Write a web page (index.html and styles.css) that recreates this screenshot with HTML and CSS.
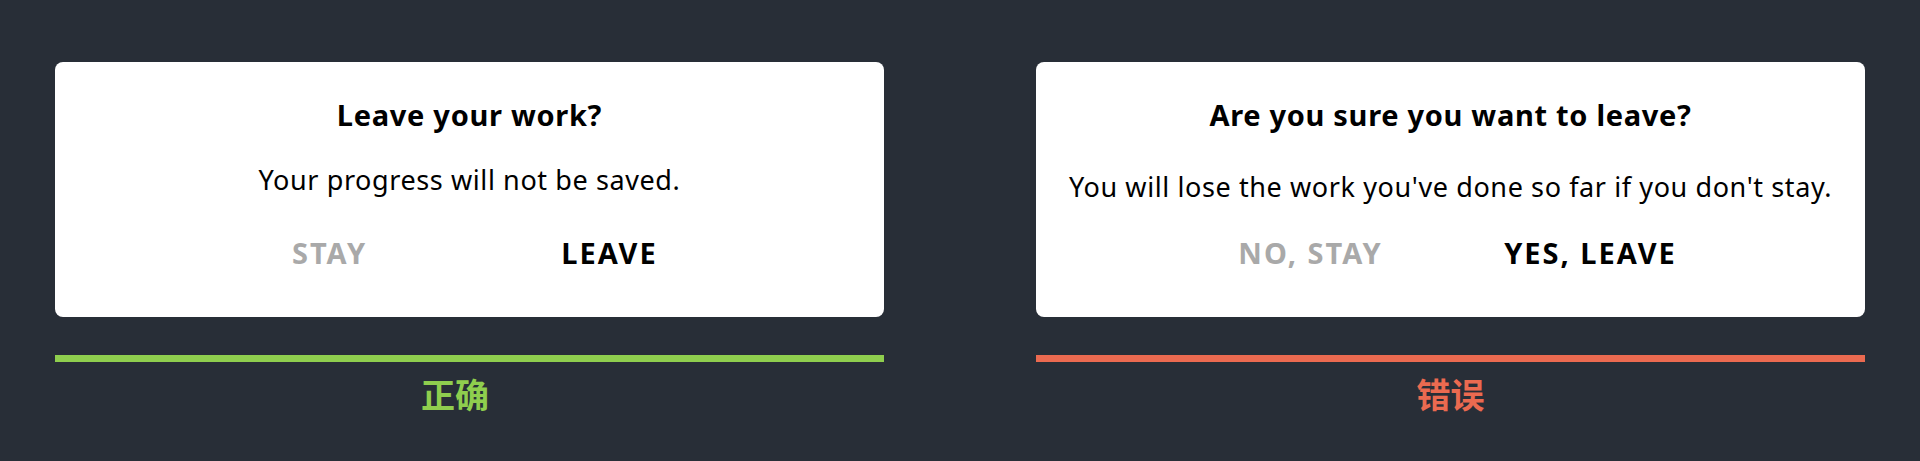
FILE: index.html
```html
<!DOCTYPE html>
<html lang="zh-CN">
<head>
<meta charset="utf-8">
<title>Dialog copy</title>
<link rel="stylesheet" href="styles.css">
</head>
<body>
<main class="page">
  <section class="example">
    <div class="dialog">
      <h2 class="dialog-title">Leave your work?</h2>
      <p class="dialog-body">Your progress will not be saved.</p>
      <div class="dialog-actions">
        <span class="action action-secondary">STAY</span>
        <span class="action action-primary">LEAVE</span>
      </div>
    </div>
    <div class="verdict-bar verdict-good"></div>
    <div class="verdict-label verdict-good-text">正确</div>
  </section>
  <section class="example">
    <div class="dialog dialog-long">
      <h2 class="dialog-title">Are you sure you want to leave?</h2>
      <p class="dialog-body">You will lose the work you've done so far if you don't stay.</p>
      <div class="dialog-actions">
        <span class="action action-secondary">NO, STAY</span>
        <span class="action action-primary">YES, LEAVE</span>
      </div>
    </div>
    <div class="verdict-bar verdict-bad"></div>
    <div class="verdict-label verdict-bad-text">错误</div>
  </section>
</main>
</body>
</html>
```

FILE: styles.css
```css
* { box-sizing: border-box; }
html, body {
  margin: 0;
  padding: 0;
  background: #282e37;
}
body {
  width: 1920px;
  height: 461px;
  overflow: hidden;
  font-family: "Noto Sans", "Open Sans", "Noto Sans CJK SC", sans-serif;
}
.page {
  display: grid;
  grid-template-columns: 829px 829px;
  column-gap: 152px;
  padding: 62px 55px 0;
}
.example {
  display: flex;
  flex-direction: column;
  align-items: stretch;
}
.dialog {
  height: 255px;
  background: #ffffff;
  border-radius: 8px;
  padding-top: 35px;
  display: flex;
  flex-direction: column;
  align-items: center;
  color: #000;
}
.dialog-title {
  margin: 0 0 30px;
  font-size: 29px;
  line-height: 36px;
  font-weight: 700;
  letter-spacing: 0.7px;
}
.dialog-body {
  margin: 0 0 38px;
  font-size: 27px;
  line-height: 34px;
  font-weight: 400;
  letter-spacing: 0.6px;
}
.dialog-long .dialog-body {
  margin: 7px 0 31px;
}
.dialog-actions {
  display: flex;
  justify-content: center;
}
.action {
  width: 280px;
  text-align: center;
  font-size: 29px;
  line-height: 36px;
  font-weight: 700;
  letter-spacing: 2px;
}
.action-secondary { color: #a9a9a9; }
.action-primary { color: #000; }
.verdict-bar {
  height: 7px;
  margin-top: 38px;
}
.verdict-good { background: #8fce4e; }
.verdict-bad { background: #eb6a50; }
.verdict-label {
  margin-top: 10px;
  text-align: center;
  font-family: "Noto Sans CJK SC", sans-serif;
  font-size: 34px;
  line-height: 44px;
  font-weight: 700;
}
.verdict-good-text {
  color: #8fce4e;
  padding-right: 29px;
}
.verdict-bad-text { color: #eb6a50; }
```
